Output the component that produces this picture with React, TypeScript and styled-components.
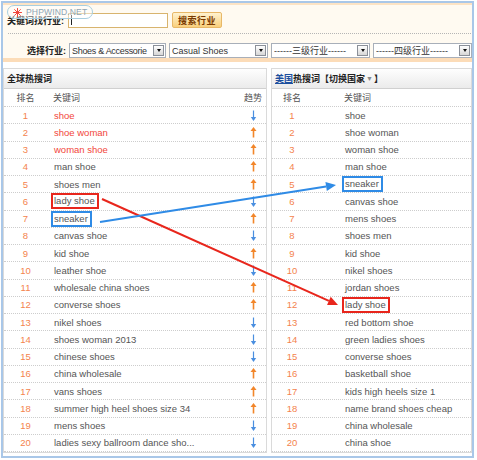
import styled, { createGlobalStyle } from 'styled-components'

type Trend = 'up' | 'down'

interface HotRow {
  word: string
  hot?: boolean
  mark?: 'red' | 'blue'
  trend?: Trend
}

const GlobalStyle = createGlobalStyle`
  html, body {
    margin: 0;
    padding: 0;
    background: #fff;
  }
  body {
    font-family: "Liberation Sans", "Noto Sans CJK SC", sans-serif;
  }
  * {
    box-sizing: border-box;
  }
`

const RED = '#e8261c'
const BLUE = '#2f8be6'

const globalRows: HotRow[] = [
  { word: 'shoe', hot: true, trend: 'down' },
  { word: 'shoe woman', hot: true, trend: 'up' },
  { word: 'woman shoe', hot: true, trend: 'up' },
  { word: 'man shoe', trend: 'up' },
  { word: 'shoes men', trend: 'up' },
  { word: 'lady shoe', mark: 'red', trend: 'down' },
  { word: 'sneaker', mark: 'blue', trend: 'up' },
  { word: 'canvas shoe', trend: 'down' },
  { word: 'kid shoe', trend: 'up' },
  { word: 'leather shoe', trend: 'down' },
  { word: 'wholesale china shoes', trend: 'up' },
  { word: 'converse shoes', trend: 'up' },
  { word: 'nikel shoes', trend: 'down' },
  { word: 'shoes woman 2013', trend: 'down' },
  { word: 'chinese shoes', trend: 'down' },
  { word: 'china wholesale', trend: 'up' },
  { word: 'vans shoes', trend: 'up' },
  { word: 'summer high heel shoes size 34', trend: 'up' },
  { word: 'mens shoes', trend: 'down' },
  { word: 'ladies sexy ballroom dance sho...', trend: 'down' },
]

const usRows: HotRow[] = [
  { word: 'shoe' },
  { word: 'shoe woman' },
  { word: 'woman shoe' },
  { word: 'man shoe' },
  { word: 'sneaker', mark: 'blue' },
  { word: 'canvas shoe' },
  { word: 'mens shoes' },
  { word: 'shoes men' },
  { word: 'kid shoe' },
  { word: 'nikel shoes' },
  { word: 'jordan shoes' },
  { word: 'lady shoe', mark: 'red' },
  { word: 'red bottom shoe' },
  { word: 'green ladies shoes' },
  { word: 'converse shoes' },
  { word: 'basketball shoe' },
  { word: 'kids high heels size 1' },
  { word: 'name brand shoes cheap' },
  { word: 'china wholesale' },
  { word: 'china shoe' },
]

const Page = styled.div`
  position: relative;
  width: 477px;
  height: 460px;
  padding: 1px;
`

const Frame = styled.div`
  width: 473px;
  height: 457px;
  border: 2px solid #a9c7e8;
  display: flex;
  flex-direction: column;
`

const Filters = styled.div`
  height: 59px;
  background: #fffaf1;
  border-top: 2px solid #fde3c4;
  border-bottom: 4px solid #fcdcb8;
  padding: 7px 0 0 4px;
`

const SearchRow = styled.div`
  display: flex;
  align-items: center;
  height: 16px;
`

const FieldLabel = styled.span<{ $w: number; $right?: boolean }>`
  width: ${({ $w }) => $w}px;
  flex-shrink: 0;
  font-size: 9px;
  font-weight: 700;
  color: #222;
  white-space: nowrap;
  text-align: ${({ $right }) => ($right ? 'right' : 'left')};
`

const FakeInput = styled.div`
  width: 100px;
  height: 15px;
  border: 1px solid #d8b46e;
  background: #fff;
  display: flex;
  align-items: center;
`

const Caret = styled.span`
  width: 1px;
  height: 10px;
  margin-left: 2px;
  background: #222;
`

const SearchButton = styled.button`
  margin-left: 4px;
  width: 50px;
  height: 16px;
  padding: 0;
  border: 1px solid #e8b868;
  border-radius: 2px;
  background: linear-gradient(#fff2cf, #f9cf7c);
  font-family: inherit;
  font-size: 9px;
  font-weight: 700;
  color: #7a3a00;
  letter-spacing: 0.5px;
`

const Divider = styled.div`
  margin: 5px 1px 0 1px;
  border-top: 1px dotted #b5b5b5;
`

const SelectRow = styled.div`
  display: flex;
  align-items: center;
  gap: 3px;
  height: 15px;
  margin-top: 9px;
`

const Select = styled.div<{ $w: number }>`
  width: ${({ $w }) => $w}px;
  height: 15px;
  flex-shrink: 0;
  border: 1px solid #a8afb9;
  background: #fff;
  display: flex;
  align-items: center;
  padding-left: 2px;
  font-size: 9px;
  color: #333;
`

const SelectText = styled.span<{ $tight?: boolean }>`
  flex: 1;
  overflow: hidden;
  white-space: nowrap;
  letter-spacing: ${({ $tight }) => ($tight ? '-0.3px' : '0')};
`

const SelectButton = styled.span`
  width: 11px;
  height: 11px;
  margin: 0 1px 0 1px;
  flex-shrink: 0;
  border: 1px solid #8b9098;
  background: linear-gradient(#ffffff, #d6d6d6);
  display: flex;
  align-items: center;
  justify-content: center;

  &::after {
    content: '';
    border-left: 2px solid transparent;
    border-right: 2px solid transparent;
    border-top: 3px solid #111;
  }
`

const Boards = styled.div`
  display: flex;
  gap: 4px;
  padding-top: 6px;
`

const Board = styled.section<{ $w: number }>`
  width: ${({ $w }) => $w}px;
  flex-shrink: 0;
  border: 1px solid #dadada;
`

const BoardHead = styled.div`
  height: 20px;
  display: flex;
  align-items: center;
  padding-left: 3px;
  background: linear-gradient(#fefefe, #ebebeb);
  border-bottom: 1px solid #d0d0d0;
  font-size: 9px;
  font-weight: 700;
  color: #222;
  white-space: nowrap;
`

const Country = styled.span`
  color: #1c4f9e;
  text-decoration: underline;
`

const Caret2 = styled.span`
  color: #888;
  font-size: 7px;
  margin: 0 1px;
`

const Row = styled.div<{ $cols: string; $head?: boolean }>`
  display: grid;
  grid-template-columns: ${({ $cols }) => $cols};
  align-items: center;
  height: ${({ $head }) => ($head ? '18px' : '17.25px')};
  border-bottom: 1px dotted #cdcdcd;
  font-size: ${({ $head }) => ($head ? '9px' : '9.5px')};
  color: #555;
`

const Rank = styled.span`
  text-align: center;
  color: #f4834d;
`

const HeadCell = styled.span<{ $pad?: number; $center?: boolean }>`
  padding-left: ${({ $pad }) => $pad ?? 0}px;
  text-align: ${({ $center }) => ($center ? 'center' : 'left')};
  color: #555;
`

const Word = styled.span<{ $pad: number; $hot?: boolean }>`
  padding-left: ${({ $pad }) => $pad}px;
  color: ${({ $hot }) => ($hot ? '#f2463a' : '#555')};
  white-space: nowrap;
  overflow: hidden;
`

const Marked = styled.span<{ $color: string }>`
  display: inline-block;
  margin-left: -3px;
  padding: 0 2px 0 1px;
  line-height: 12px;
  border: 2px solid ${({ $color }) => $color};
`

const TrendCell = styled.span`
  display: flex;
  justify-content: center;
`

const Watermark = styled.div`
  position: absolute;
  left: 7px;
  top: 5px;
  width: 86px;
  height: 14px;
  display: flex;
  align-items: center;
  gap: 4px;
  padding-left: 5px;
  border: 1px solid #a8cfe0;
  border-radius: 7px;
  background: rgba(255, 255, 255, 0.45);
  font-size: 8.6px;
  color: #8ea6b4;
  letter-spacing: 0.1px;
`

const Overlay = styled.svg`
  position: absolute;
  left: 0;
  top: 0;
  pointer-events: none;
`

const TrendIcon = ({ dir }: { dir: Trend }) =>
  dir === 'up' ? (
    <svg width="7" height="11" viewBox="0 0 7 11">
      <line x1="3.5" y1="10.5" x2="3.5" y2="3" stroke="#f2862a" strokeWidth="1.6" />
      <polygon points="3.5,0 0.5,4 6.5,4" fill="#f2862a" />
    </svg>
  ) : (
    <svg width="7" height="11" viewBox="0 0 7 11">
      <line x1="3.5" y1="0.5" x2="3.5" y2="8" stroke="#4a8fe0" strokeWidth="1.2" />
      <polygon points="3.5,11 0.8,7 6.2,7" fill="#4a8fe0" />
    </svg>
  )

const Star = () => (
  <svg width="9" height="9" viewBox="0 0 10 10">
    <g stroke="#f0453a" strokeWidth="1.1" strokeLinecap="round">
      <line x1="5" y1="0.5" x2="5" y2="9.5" />
      <line x1="0.5" y1="5" x2="9.5" y2="5" />
      <line x1="1.8" y1="1.8" x2="8.2" y2="8.2" />
      <line x1="8.2" y1="1.8" x2="1.8" y2="8.2" />
    </g>
  </svg>
)

// annotation arrow between the two lists
const Pointer = ({ x1, y1, x2, y2, color }: { x1: number; y1: number; x2: number; y2: number; color: string }) => {
  const len = Math.hypot(x2 - x1, y2 - y1)
  const ux = (x2 - x1) / len
  const uy = (y2 - y1) / len
  const bx = x2 - ux * 10
  const by = y2 - uy * 10
  const px = -uy * 4.5
  const py = ux * 4.5
  return (
    <g>
      <line x1={x1} y1={y1} x2={bx} y2={by} stroke={color} strokeWidth="2" />
      <polygon points={`${x2},${y2} ${bx + px},${by + py} ${bx - px},${by - py}`} fill={color} />
    </g>
  )
}

const renderWord = (row: HotRow, pad: number) => (
  <Word $pad={pad} $hot={row.hot}>
    {row.mark ? <Marked $color={row.mark === 'red' ? RED : BLUE}>{row.word}</Marked> : row.word}
  </Word>
)

const LEFT_COLS = '43px 1fr 26px'
const RIGHT_COLS = '40px 1fr'

export default function App() {
  return (
    <Page>
      <GlobalStyle />
      <Frame>
        <Filters>
          <SearchRow>
            <FieldLabel $w={61}>关键词找行业:</FieldLabel>
            <FakeInput>
              <Caret />
            </FakeInput>
            <SearchButton>搜索行业</SearchButton>
          </SearchRow>
          <Divider />
          <SelectRow>
            <FieldLabel $w={59} $right>选择行业:</FieldLabel>
            <Select $w={97}>
              <SelectText $tight>Shoes &amp; Accessorie</SelectText>
              <SelectButton />
            </Select>
            <Select $w={99}>
              <SelectText>Casual Shoes</SelectText>
              <SelectButton />
            </Select>
            <Select $w={99}>
              <SelectText>------三级行业------</SelectText>
              <SelectButton />
            </Select>
            <Select $w={99}>
              <SelectText>------四级行业------</SelectText>
              <SelectButton />
            </Select>
          </SelectRow>
        </Filters>

        <Boards>
          <Board $w={264}>
            <BoardHead>全球热搜词</BoardHead>
            <Row $cols={LEFT_COLS} $head>
              <HeadCell $center>排名</HeadCell>
              <HeadCell $pad={6}>关键词</HeadCell>
              <HeadCell $center>趋势</HeadCell>
            </Row>
            {globalRows.map((row, i) => (
              <Row key={row.word} $cols={LEFT_COLS}>
                <Rank>{i + 1}</Rank>
                {renderWord(row, 7)}
                <TrendCell>{row.trend && <TrendIcon dir={row.trend} />}</TrendCell>
              </Row>
            ))}
          </Board>

          <Board $w={201}>
            <BoardHead>
              <Country>美国</Country>热搜词【切换国家<Caret2>▼</Caret2>】
            </BoardHead>
            <Row $cols={RIGHT_COLS} $head>
              <HeadCell $center>排名</HeadCell>
              <HeadCell $pad={32}>关键词</HeadCell>
            </Row>
            {usRows.map((row, i) => (
              <Row key={row.word} $cols={RIGHT_COLS}>
                <Rank>{i + 1}</Rank>
                {renderWord(row, 33)}
              </Row>
            ))}
          </Board>
        </Boards>
      </Frame>

      <Watermark>
        <Star />
        <span>PHPWIND.NET</span>
      </Watermark>

      <Overlay width="477" height="460" viewBox="0 0 477 460">
        <Pointer x1={102} y1={199} x2={338} y2={305} color={RED} />
        <Pointer x1={100} y1={222} x2={336} y2={185} color={BLUE} />
      </Overlay>
    </Page>
  )
}
